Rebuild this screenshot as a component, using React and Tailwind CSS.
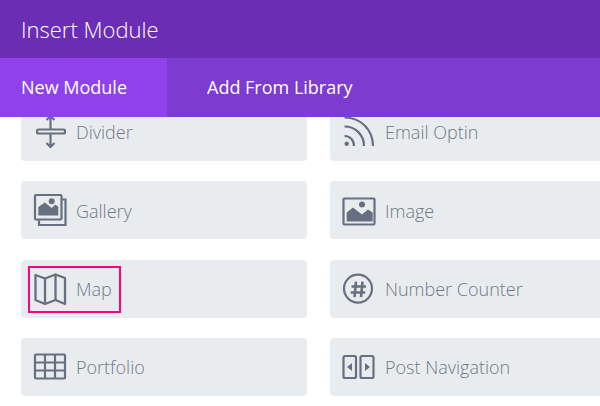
import React from "react";

const ink = "#667080";

const DividerIcon = () => (
  <svg viewBox="0 0 32 32" className="w-8 h-8 overflow-visible" fill="none" stroke={ink} strokeWidth="2.2">
    <rect x="3" y="13.5" width="28" height="4" rx="1.5" />
    <path d="M16.5 0v13M16.5 18v13M12.5 4l4-4 4 4M12.5 27l4 4 4-4" />
  </svg>
);

const RssIcon = () => (
  <svg viewBox="0 0 32 32" className="w-8 h-8 overflow-visible" fill="none" stroke={ink} strokeWidth="2.2">
    <path d="M1.5 20c5.5 0 9.5 4 9.5 10M1.5 10.500c11 0 19.500 8.500 19.500 19.500M1.500 1.500c16.500 0 28.500 12.500 28.500 28.500" />
    <circle cx="3.700" cy="27.700" r="2.200" fill={ink} stroke="none" />
  </svg>
);

const GalleryIcon = () => (
  <svg viewBox="0 0 32 32" className="w-8 h-8 overflow-visible" fill="none" stroke={ink} strokeWidth="2.200">
    <rect x="1" y="1" width="26.500" height="24.500" rx="1" />
    <path d="M28 5.500h3.500v25.500H5V26" />
    <path d="M4.300 13l6.500-4.500 7 5.500 3.500-3.500 3 2.300v8.700h-20z" fill={ink} stroke="none" />
    <circle cx="17.700" cy="7.200" r="3" fill={ink} stroke="none" />
  </svg>
);

const ImageIcon = () => (
  <svg viewBox="0 0 32 32" className="w-8 h-8 overflow-visible" fill="none" stroke={ink} strokeWidth="2.200">
    <rect x="0.500" y="4.500" width="31" height="26" rx="1" />
    <path d="M3.700 18.500l6.300-5 9 7 6-5 4.700 3v9h-26z" fill={ink} stroke="none" />
    <circle cx="19" cy="10.500" r="3" fill={ink} stroke="none" />
  </svg>
);

const MapIcon = () => (
  <svg viewBox="0 0 32 32" className="w-8 h-8 overflow-visible" fill="none" stroke={ink} strokeWidth="2.300" strokeLinejoin="round">
    <path d="M1.500 2L11 5.500l10.500-4L31 5v26l-9.500-4L11 31l-9.500-4z" />
    <path d="M11 5.500V31M21.500 1.500V27" />
  </svg>
);

const CounterIcon = () => (
  <svg viewBox="0 0 32 32" className="w-8 h-8 overflow-visible" fill="none" stroke={ink} strokeWidth="2.200">
    <circle cx="15" cy="15.600" r="14" />
    <path d="M13 8.700l-1.500 15.500M19.500 8.700L18 24.200M8.500 13.500h14.500M7.700 19.500h14.500" strokeWidth="2.600" />
  </svg>
);

const PortfolioIcon = () => (
  <svg viewBox="0 0 32 32" className="w-8 h-8 overflow-visible" fill="none" stroke={ink} strokeWidth="2.200">
    <rect x="1" y="3.500" width="30" height="24" rx="1" />
    <path d="M1 11.500h30M1 19.500h30M11 3.500v24M21 3.500v24" />
  </svg>
);

const PostNavIcon = () => (
  <svg viewBox="0 0 32 32" className="w-8 h-8 overflow-visible" fill="none" stroke={ink} strokeWidth="2.200">
    <rect x="0.500" y="5" width="12.500" height="22" rx="1.500" />
    <rect x="17.500" y="5" width="13" height="22" rx="1.500" />
    <path d="M9 12v8l-5-4zM22 12v8l5-4z" fill={ink} stroke="none" />
  </svg>
);

const modules = [
  { name: "Divider", icon: DividerIcon },
  { name: "Email Optin", icon: RssIcon },
  { name: "Gallery", icon: GalleryIcon },
  { name: "Image", icon: ImageIcon },
  { name: "Map", icon: MapIcon, marked: true },
  { name: "Number Counter", icon: CounterIcon },
  { name: "Portfolio", icon: PortfolioIcon },
  { name: "Post Navigation", icon: PostNavIcon },
];

const App = () => {
  return (
    <div className="w-[600px] h-[406px] overflow-hidden bg-white font-['Open_Sans',sans-serif]">
      <header className="relative z-10 h-[58px] bg-[#6a2db4] pl-[21px] flex items-center">
        <h1 className="text-[22px] font-light text-white">Insert Module</h1>
      </header>
      <nav className="relative z-10 h-[59px] bg-[#7e3bd0] flex text-[18px] font-normal text-white">
        <div className="w-[167px] bg-[#8f42ec] pl-[21px] flex items-center">New Module</div>
        <div className="pl-[40px] flex items-center">Add From Library</div>
      </nav>

      {/* list is scrolled, so the first row sits partly under the tabs */}
      <div className="-mt-[14px] pl-[21px] grid grid-cols-[286px_286px] gap-x-[23px] gap-y-[20.4px]">
        {modules.map((m) => (
          <div key={m.name} className="relative h-[58px] bg-[#e9ecef] rounded-[4px] pl-[13px] flex items-center gap-[10px]">
            <m.icon />
            <span className="pt-[1.6px] text-[18px] font-light text-[#6f7a87]">{m.name}</span>
            {m.marked && (
              <div className="absolute left-[7px] top-[6.2px] w-[93px] h-[47px] border-2 border-[#ff0080]" />
            )}
          </div>
        ))}
      </div>
    </div>
  );
};

export default App;
